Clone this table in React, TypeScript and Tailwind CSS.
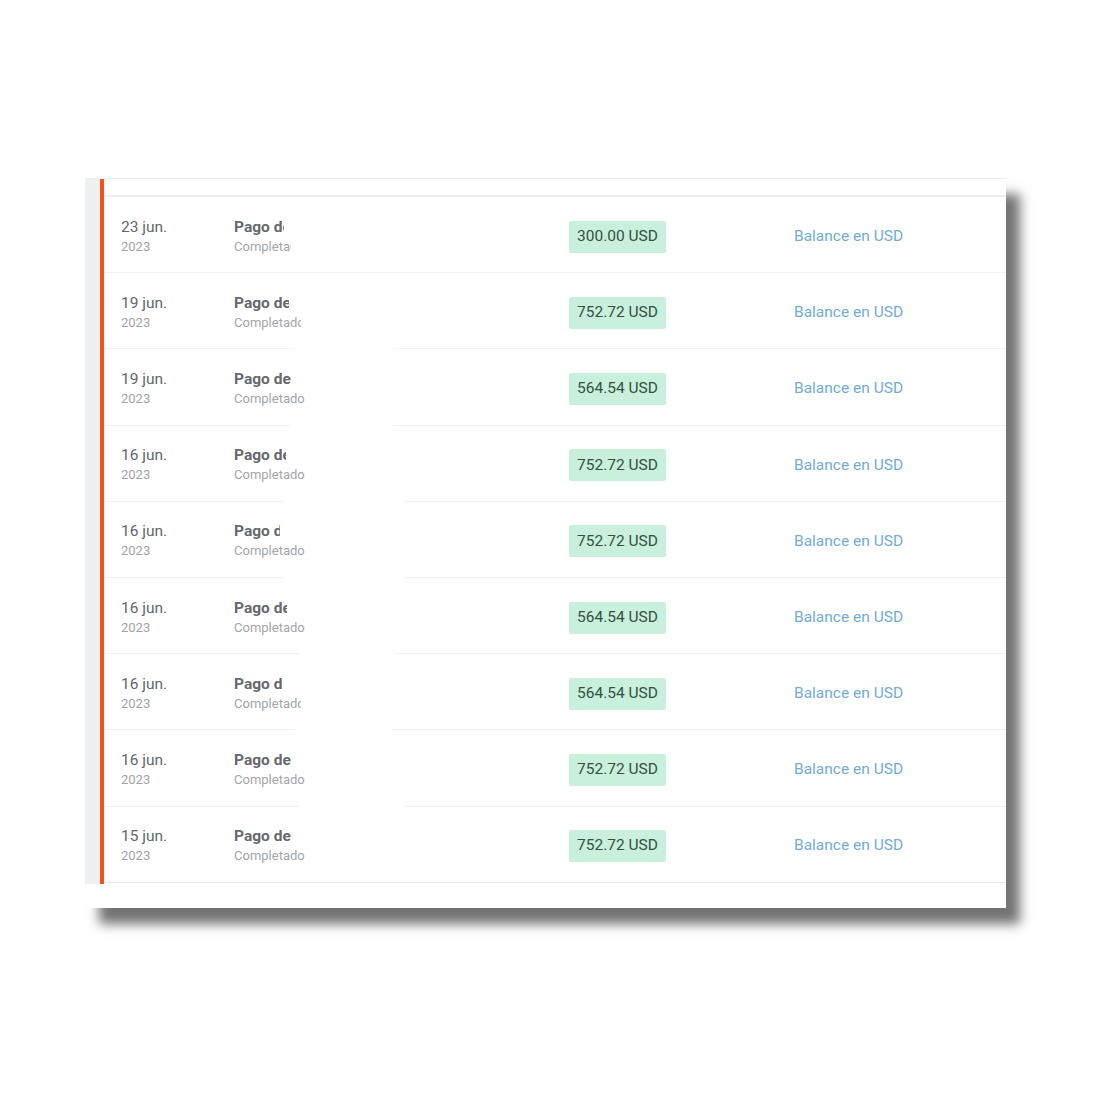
import React from "react";

type Row = {
  day: string;
  year: string;
  amount: string;
  titleW: number;
  subW: number;
  gap?: [number, number];
};

const rows: Row[] = [
  { day: "23 jun.", year: "2023", amount: "300.00 USD", titleW: 50, subW: 57 },
  { day: "19 jun.", year: "2023", amount: "752.72 USD", titleW: 55, subW: 67, gap: [190, 290] },
  { day: "19 jun.", year: "2023", amount: "564.54 USD", titleW: 80, subW: 80, gap: [186, 290] },
  { day: "16 jun.", year: "2023", amount: "752.72 USD", titleW: 52, subW: 80, gap: [180, 300] },
  { day: "16 jun.", year: "2023", amount: "752.72 USD", titleW: 46, subW: 80, gap: [180, 300] },
  { day: "16 jun.", year: "2023", amount: "564.54 USD", titleW: 53, subW: 80, gap: [195, 290] },
  { day: "16 jun.", year: "2023", amount: "564.54 USD", titleW: 48, subW: 67, gap: [190, 288] },
  { day: "16 jun.", year: "2023", amount: "752.72 USD", titleW: 80, subW: 80, gap: [195, 300] },
  { day: "15 jun.", year: "2023", amount: "752.72 USD", titleW: 80, subW: 80 },
];

function TxRow({ row, last }: { row: Row; last: boolean }) {
  return (
    <div
      className={`relative flex items-center h-[76.2px] pt-[4px] ${last ? "border-b border-[#e9eaec]" : "border-b border-[#f1f2f4]"}`}
    >
      <div className="w-[130px] pl-[17px] flex flex-col">
        <span className="text-[15.5px] leading-[20px] text-[#63676c]">{row.day}</span>
        <span className="text-[13px] leading-[20px] text-[#a0a4a9]">{row.year}</span>
      </div>
      <div className="w-[335px] flex flex-col">
        <span
          className="overflow-hidden whitespace-nowrap text-[15.5px] leading-[20px] font-bold text-[#66696e]"
          style={{ width: row.titleW }}
        >
          Pago de
        </span>
        <span
          className="overflow-hidden whitespace-nowrap text-[13px] leading-[20px] text-[#a3a6ab]"
          style={{ width: row.subW }}
        >
          Completado
        </span>
      </div>
      <div className="w-[225px]">
        <span className="inline-flex items-center h-[32px] px-[8px] rounded-[2px] bg-[#c8f0dc] text-[15.5px] text-[#34503f]">
          {row.amount}
        </span>
      </div>
      <span className="text-[15.5px] text-[#72acd8]">Balance en USD</span>
      {row.gap && (
        <div
          className="absolute bottom-[-1px] h-[2px] bg-white"
          style={{ left: row.gap[0], width: row.gap[1] - row.gap[0] }}
        />
      )}
    </div>
  );
}

export default function App() {
  return (
    <div
      className="w-[1120px] h-[1120px] bg-white pt-[178px] pl-[85px]"
      style={{ fontFamily: "Roboto, 'Noto Sans', sans-serif" }}
    >
      <div className="w-[921px] h-[730px] bg-white flex shadow-[14px_16px_11px_rgba(0,0,0,0.55)] border-t border-[#eceef0]">
        <div className="w-[15px] bg-[#eef0f2] h-[705px]" />
        <div className="w-[4px] bg-[#f4511e] h-[705px]" />
        <div className="flex-1 flex flex-col">
          <div className="h-[18px] border-b-2 border-[#eef0f2]" />
          {rows.map((r, i) => (
            <TxRow key={i} row={r} last={i === rows.length - 1} />
          ))}
        </div>
      </div>
    </div>
  );
}
